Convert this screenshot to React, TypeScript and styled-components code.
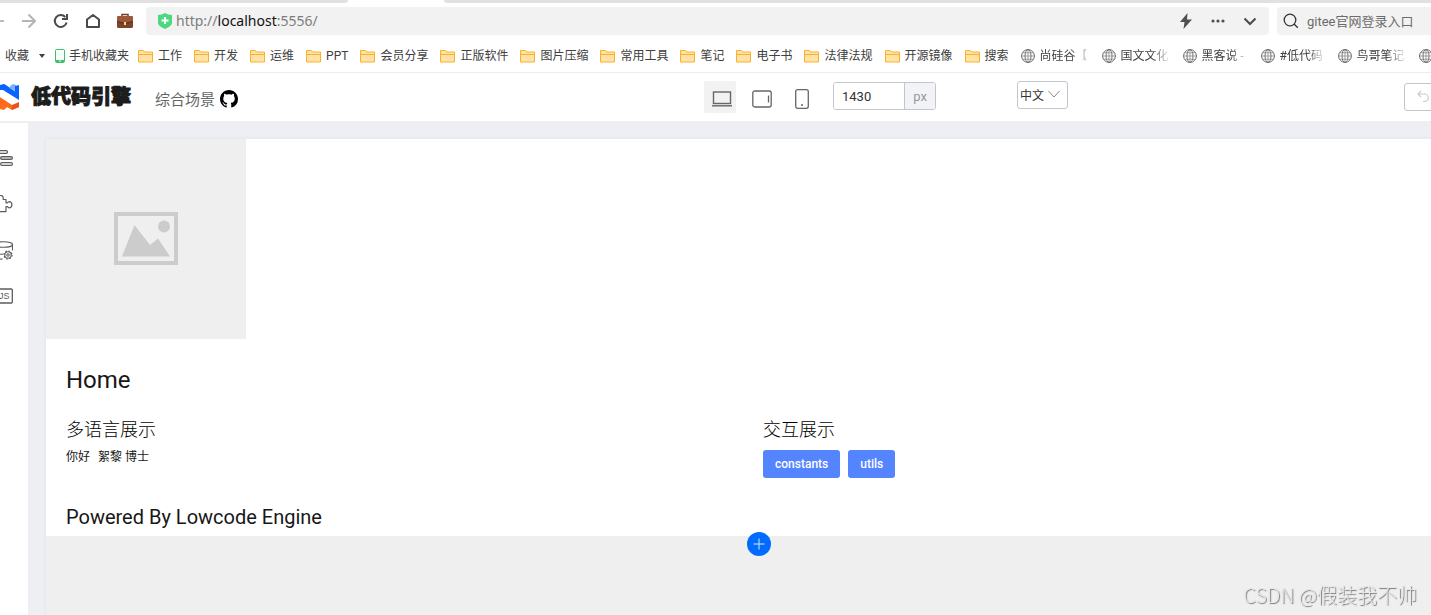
import React from "react";
import styled, { createGlobalStyle, css } from "styled-components";

const GlobalStyle = createGlobalStyle`
  *, *::before, *::after { box-sizing: border-box; }
  body {
    margin: 0;
    background: #fff;
    color: #333;
    font-family: Roboto, "Noto Sans CJK SC", sans-serif;
    font-size: 12px;
    overflow: hidden;
  }
  svg { display: block; flex: none; }
  button, input, select { font: inherit; color: inherit; margin: 0; }
  h1, h2, p { margin: 0; font-weight: 400; }
`;

const Page = styled.div`
  display: flex;
  flex-direction: column;
  min-height: 100vh;
  overflow: hidden;
`;

/* Browser chrome */

const TabStrip = styled.div`
  display: flex;
  height: 3px;
`;

const InactiveTabs = styled.div<{ $side: "left" | "right" }>`
  background: #e1e1e1;
  ${(p) =>
    p.$side === "left"
      ? css`
          flex: 0 0 348px;
          border-bottom-right-radius: 3px;
        `
      : css`
          flex: 1;
          margin-left: 96px;
          border-bottom-left-radius: 3px;
        `}
`;

const NavBar = styled.nav`
  display: flex;
  align-items: center;
  height: 36px;
  overflow: hidden;
`;

const NavButtons = styled.div`
  display: flex;
  align-items: center;
  gap: 16px;
  margin-left: -11px;
  padding-right: 13px;
`;

const IconButton = styled.button`
  display: flex;
  align-items: center;
  justify-content: center;
  min-width: 16px;
  height: 20px;
  padding: 0;
  border: 0;
  background: none;
  color: #4a4a4a;
`;

const AddressBar = styled.div`
  display: flex;
  align-items: center;
  flex: 1;
  height: 28px;
  padding: 0 11px 0 12px;
  border-radius: 4px;
  background: #f2f2f2;
`;

const Url = styled.a`
  flex: 1;
  margin-left: 4px;
  color: #7d7d7d;
  font-family: "Noto Sans", sans-serif;
  font-size: 14px;
  line-height: 20px;
  text-decoration: none;
`;

const Host = styled.span`
  color: #111;
`;

const AddressActions = styled.div`
  display: flex;
  gap: 16px;
`;

const SearchBox = styled.label`
  display: flex;
  align-items: center;
  gap: 8px;
  flex: 0 0 160px;
  height: 28px;
  margin: 0 -6px 0 8px;
  padding-left: 6px;
  border-radius: 4px;
  background: #f2f2f2;
`;

const SearchInput = styled.input`
  width: 130px;
  padding: 0;
  border: 0;
  outline: 0;
  background: none;
  color: #666;
  font-size: 13px;
  &::placeholder { color: #6b6b6b; opacity: 1; }
`;

const BookmarkBar = styled.div`
  display: flex;
  align-items: center;
  gap: 12px;
  height: 34px;
  border-bottom: 1px solid #ececec;
  overflow: hidden;
`;

const FavoriteGroup = styled.div`
  display: flex;
  align-items: center;
  gap: 10px;
  margin: 0 -3px 0 -12px;
`;

const Bookmark = styled.a<{ $gap?: number }>`
  display: flex;
  align-items: center;
  flex: none;
  gap: ${(p) => p.$gap ?? 5}px;
  color: #404040;
  line-height: 20px;
  white-space: nowrap;
  text-decoration: none;
`;

const FadedLabel = styled.span<{ $width: number }>`
  width: ${(p) => p.$width}px;
  mask-image: linear-gradient(to right, #000 60%, transparent);
`;

/* Designer header */

const Header = styled.header`
  display: grid;
  grid-template-columns: 2fr auto 1fr;
  align-items: center;
  height: 48px;
  padding-right: 11px;
`;

const Brand = styled.div`
  display: flex;
  align-items: center;
  margin-left: -7px;
`;

const BrandName = styled.strong`
  margin: 0 24px 0 12px;
  color: #1c1c1c;
  font-size: 20px;
  font-weight: 900;
  line-height: 28px;
  -webkit-text-stroke: 1px #1c1c1c;
`;

const SceneName = styled.span`
  margin: 6px 5px 0 0;
  color: #666;
  font-size: 15px;
  line-height: 20px;
`;

const RepoLink = styled.a`
  margin-top: 4px;
  color: #000;
`;

const Tools = styled.div`
  display: flex;
  align-items: center;
`;

const DeviceButton = styled.button<{ $active?: boolean }>`
  display: flex;
  align-items: center;
  justify-content: center;
  width: 32px;
  height: 32px;
  margin-right: 8px;
  padding: 4px 0 0 4px;
  border: 0;
  border-radius: 2px;
  background: ${(p) => (p.$active ? "#f2f2f2" : "transparent")};
  color: #666;
`;

const WidthField = styled.label`
  display: flex;
  width: 103px;
  height: 28px;
  margin: 0 81px 2px 9px;
  border: 1px solid #c4c6cf;
  border-radius: 3px;
  overflow: hidden;
`;

const WidthInput = styled.input`
  flex: 1;
  min-width: 0;
  padding: 0 8px;
  border: 0;
  outline: 0;
  background: #fff;
  font-size: 13px;
`;

const Unit = styled.span`
  width: 31px;
  border-left: 1px solid #c4c6cf;
  background: #f2f3f7;
  color: #999;
  font-size: 13px;
  line-height: 28px;
  text-align: center;
`;

const LocaleField = styled.label`
  position: relative;
  width: 51px;
  height: 28px;
  margin-bottom: 4px;
  svg {
    position: absolute;
    top: 9px;
    right: 8px;
    pointer-events: none;
  }
`;

const LocaleSelect = styled.select`
  width: 100%;
  height: 100%;
  padding: 2px 2px 0;
  appearance: none;
  border: 1px solid #c4c6cf;
  border-radius: 3px;
  background: #fff;
`;

const UndoButton = styled.button`
  display: flex;
  align-items: center;
  justify-self: end;
  width: 44px;
  height: 28px;
  margin-right: -28px;
  padding: 0 11px;
  border: 1px solid #c4c6cf;
  border-radius: 3px;
  background: #fff;
  color: #ccc;
`;

/* Workspace */

const Workspace = styled.main`
  display: flex;
  flex: 1;
  border-top: 2px solid #edeff3;
`;

const SideRail = styled.aside`
  display: flex;
  flex-direction: column;
  gap: 26px;
  flex: 0 0 28px;
  padding-top: 25px;
  overflow: hidden;
`;

const RailButton = styled(IconButton)`
  width: 20px;
  margin-left: -7px;
  color: #5c5c5c;
`;

const Stage = styled.div`
  display: flex;
  flex: 1;
  min-width: 0;
  padding: 16px 0 0 18px;
  background: #edeff3;
  overflow: hidden;
`;

const Canvas = styled.div`
  flex: 1;
  margin-right: -45px;
  background: #efefef;
  box-shadow: 0 0 3px rgba(31, 56, 88, 0.08);
`;

const Document = styled.article`
  position: relative;
  background: #fff;
  color: #171717;
`;

const Placeholder = styled.figure`
  display: flex;
  align-items: center;
  justify-content: center;
  width: 200px;
  height: 200px;
  margin: 0;
  background: #efefef;
`;

const Content = styled.div`
  padding: 20px 20px 0;
`;

const PageTitle = styled.h1`
  font-size: 24px;
  line-height: 42px;
`;

const Columns = styled.div`
  display: grid;
  grid-template-columns: 1fr 1fr;
  gap: 4px;
  padding: 16px 0 20px;
`;

const SectionTitle = styled.h2`
  color: #000;
  font-size: 18px;
  font-weight: 300;
  line-height: 26px;
`;

const Greeting = styled.p`
  display: flex;
  padding-top: 4px;
  line-height: 20px;
  span + span { margin-left: 8px; }
`;

const ButtonRow = styled.div`
  display: flex;
  gap: 8px;
  padding-top: 7px;
`;

const PrimaryButton = styled.button`
  height: 28px;
  padding: 0 12px;
  border: 0;
  border-radius: 3px;
  background: #5584ff;
  color: #fff;
  font-weight: 500;
`;

const Footer = styled.h2`
  padding: 4px 0;
  font-size: 20px;
  line-height: 30px;
`;

const AddButton = styled.button`
  position: absolute;
  left: 50%;
  bottom: -20px;
  display: flex;
  align-items: center;
  justify-content: center;
  width: 24px;
  height: 24px;
  margin-left: -14px;
  padding: 0;
  border: 0;
  border-radius: 50%;
  background: #006cff;
  color: #d9e8ff;
`;

const Watermark = styled.div`
  position: fixed;
  right: 14px;
  bottom: 7px;
  color: #e8e8e8;
  font-family: "Noto Sans CJK SC", sans-serif;
  font-size: 20px;
  font-weight: 300;
  line-height: 26px;
  text-shadow: 1px 1px 1px #777;
`;

/* Icons */

const stroke = { fill: "none", stroke: "currentColor" };

const BackIcon = () => (
  <svg width="14" height="16" viewBox="0 0 14 16" fill="none" stroke="#bbb" strokeWidth="2">
    <path d="M14 8H1M7 2L1 8l6 6" />
  </svg>
);

const ForwardIcon = () => (
  <svg width="14" height="16" viewBox="0 0 14 16" fill="none" stroke="#b5b5b5" strokeWidth="2">
    <path d="M0 8h13M6.500 1.500L13 8l-6.500 6.500" />
  </svg>
);

const ReloadIcon = () => (
  <svg width="16" height="16" viewBox="0 0 16 16" {...stroke} strokeWidth="2">
    <path d="M13.600 9.500A6 6 0 1 1 12.300 4" />
    <path d="M14 1v5H9" />
  </svg>
);

const HomeIcon = () => (
  <svg width="16" height="16" viewBox="0 0 16 16" {...stroke} strokeWidth="2" strokeLinejoin="round">
    <path d="M2 6.500L8 2l6 4.500V14H2z" />
  </svg>
);

const BriefcaseIcon = () => (
  <svg width="16" height="16" viewBox="0 0 16 16">
    <path d="M5 4V1.500h6V4" fill="none" stroke="#7a3d25" strokeWidth="1.500" />
    <rect y="3" width="16" height="12" rx="1.500" fill="#7d432b" />
    <path d="M0 4.500A1.500 1.500 0 0 1 1.500 3h13A1.500 1.500 0 0 1 16 4.500V8L8 10 0 8z" fill="#9b583b" />
    <path d="M0 8.500l8 2 8-2" fill="none" stroke="#5e2d1b" />
    <rect x="7" y="9" width="2" height="3" fill="#ffd98a" />
  </svg>
);

const ShieldIcon = () => (
  <svg width="14" height="16" viewBox="0 0 14 16">
    <path d="M0 2Q4 2 7 0q3 2 7 2v8q0 3-7 6-7-3-7-6z" fill="#4bd880" />
    <path d="M7 4v7M3.500 7.500h7" stroke="#fff" strokeWidth="2" />
  </svg>
);

const BoltIcon = () => (
  <svg width="16" height="16" viewBox="0 0 16 16" fill="#505050">
    <path d="M9.500 0L2 9h4.500L5.500 16 14 6.500H9z" />
  </svg>
);

const DotsIcon = () => (
  <svg width="16" height="16" viewBox="0 0 16 16" fill="#505050">
    <circle cx="3" cy="8" r="1.600" />
    <circle cx="8" cy="8" r="1.600" />
    <circle cx="13" cy="8" r="1.600" />
  </svg>
);

const ChevronIcon = () => (
  <svg width="16" height="16" viewBox="0 0 16 16" {...stroke} strokeWidth="2">
    <path d="M2.500 5.500L8 11l5.500-5.500" />
  </svg>
);

const SearchIcon = () => (
  <svg width="16" height="16" viewBox="0 0 16 16" {...stroke} strokeWidth="1.300">
    <circle cx="7" cy="7" r="5.800" />
    <path d="M11 11l3.800 3.800" />
  </svg>
);

const StarIcon = () => (
  <svg width="12" height="14" viewBox="0 0 12 14" fill="#ffb340">
    <path d="M5 1l1.800 4 5.200.5-4 3 1 4.500L5 11z" />
  </svg>
);

const CaretIcon = () => (
  <svg width="6" height="4" viewBox="0 0 6 4" fill="#404040">
    <path d="M0 0h6L3 4z" />
  </svg>
);

const PhoneBookmarkIcon = () => (
  <svg width="10" height="14" viewBox="0 0 10 14">
    <rect x=".5" y=".5" width="9" height="13" rx="1" fill="#f3fff7" stroke="#3fbf6c" />
    <path d="M1 11h8v2H1z" fill="#3fbf6c" />
    <path d="M4 12h2" stroke="#fff" />
  </svg>
);

const FolderIcon = () => (
  <svg width="15" height="14" viewBox="0 0 15 14">
    <path d="M.5 13V1.500h4.500L7 3h7.500v10z" fill="#ffe2a6" stroke="#fbb02d" strokeLinejoin="round" />
    <path d="M1 5.500h13" stroke="#fbb02d" />
  </svg>
);

const GlobeIcon = () => (
  <svg width="14" height="14" viewBox="0 0 14 14" fill="none" stroke="#6a6a6a">
    <circle cx="7" cy="7" r="6.400" />
    <ellipse cx="7" cy="7" rx="3" ry="6.400" strokeWidth=".9" />
    <path d="M7 .6v12.800M.6 7h12.800M1.800 3.800h10.400M1.800 10.200h10.400" strokeWidth=".6" />
  </svg>
);

const LogoIcon = () => (
  <svg width="26" height="26" viewBox="0 0 26 26">
    <path d="M0 4l7-3v8l-7 4z" fill="#8db9ff" />
    <path d="M7 1l4-1 6 4v6L7 6z" fill="#0a62ff" />
    <path d="M11 0l15 10v7L7 5z" fill="#0a62ff" />
    <path d="M17 4V2l3-2 3 1v7z" fill="#7fb0ff" />
    <path d="M22 2l4-1v16l-4-3z" fill="#0a62ff" />
    <path d="M0 14l7-2v12l-7-4z" fill="#ffb088" />
    <path d="M7 13l12 7 7-3v6l-7 3-5-3-3 3-4-1z" fill="#ff6a1a" />
    <path d="M19 20l7-3v6l-7 3z" fill="#e8541a" />
    <path d="M7 6l3 0 16 10v2l-7 3L7 13z" fill="#fff" />
  </svg>
);

const GithubIcon = () => (
  <svg width="18" height="18" viewBox="0 0 16 16" fill="currentColor">
    <path d="M8 0C3.580 0 0 3.580 0 8c0 3.540 2.290 6.530 5.470 7.590.4.070.55-.17.55-.38 0-.19-.01-.82-.01-1.490-2.010.37-2.530-.49-2.690-.94-.09-.23-.48-.94-.82-1.130-.28-.15-.68-.52-.01-.53.63-.01 1.080.58 1.230.82.72 1.210 1.870.87 2.330.66.07-.52.28-.87.51-1.070-1.780-.2-3.640-.89-3.640-3.950 0-.87.31-1.590.82-2.150-.08-.2-.36-1.020.08-2.120 0 0 .67-.21 2.200.82.64-.18 1.320-.27 2-.27s1.360.09 2 .27c1.530-1.040 2.200-.82 2.200-.82.44 1.100.16 1.920.08 2.120.51.56.82 1.270.82 2.150 0 3.070-1.870 3.750-3.650 3.950.29.25.54.73.54 1.480 0 1.070-.01 1.930-.01 2.200 0 .21.15.46.55.38A8.010 8.010 0 0 0 16 8c0-4.420-3.580-8-8-8z" />
  </svg>
);

const LaptopIcon = () => (
  <svg width="20" height="16" viewBox="0 0 20 16" {...stroke}>
    <rect x="1.500" y="1" width="17" height="11.500" strokeWidth="1.400" />
    <path d="M0 14.800h20" strokeWidth="1.400" />
  </svg>
);

const TabletIcon = () => (
  <svg width="20" height="18" viewBox="0 0 20 18" {...stroke} strokeWidth="1.300">
    <rect x=".8" y="1" width="18.400" height="16" rx="2" />
    <path d="M16.500 5.500v7" />
  </svg>
);

const PhoneIcon = () => (
  <svg width="14" height="20" viewBox="0 0 14 20" {...stroke} strokeWidth="1.300">
    <rect x=".7" y=".7" width="12.600" height="18.600" rx="2" />
    <path d="M6 16h2" strokeWidth="1.600" />
  </svg>
);

const LocaleChevron = () => (
  <svg width="12" height="8" viewBox="0 0 12 8" fill="none" stroke="#888">
    <path d="M.5 1L6 7l5.500-6" />
  </svg>
);

const UndoIcon = () => (
  <svg width="20" height="14" viewBox="0 0 20 14" {...stroke} strokeWidth="1.200">
    <path d="M5 1L2 4l3 3M2 4h6.500a3.600 3.600 0 0 1 0 7.500H7" />
  </svg>
);

const OutlineIcon = () => (
  <svg width="20" height="18" viewBox="0 0 20 18" {...stroke} strokeWidth="1.200">
    <rect x="1" y="1.600" width="13.500" height="2.800" rx="1.400" />
    <rect x="7.600" y="7.600" width="11.800" height="2.800" rx="1.400" fill="#ccc" />
    <rect x="7.600" y="13.600" width="11.800" height="2.800" rx="1.400" />
  </svg>
);

const PuzzleIcon = () => (
  <svg width="20" height="18" viewBox="0 0 20 18" {...stroke} strokeWidth="1.200" strokeLinejoin="round">
    <path d="M1 4.500h4V3a2.600 2.600 0 0 1 5.200 0v1.500H13v3.300h1.500q.6-1.200 2-1.200 2.400.4 2.400 3.100t-2.400 3.100q-1.400 0-2-1.200H13v5H1v-4.500h1a2.200 2.200 0 0 0 0-4.400H1z" />
  </svg>
);

const DatabaseIcon = () => (
  <svg width="20" height="20" viewBox="0 0 20 20" {...stroke} strokeWidth="1.100">
    <ellipse cx="10.500" cy="4.500" rx="9" ry="2.800" />
    <path d="M1.500 4.500v12c0 1.500 4 2.600 8 2.600M19.500 4.500v6M1.500 12.500c0 1.500 5 2 9 1.500" />
    <circle cx="15" cy="15" r="3.200" />
    <circle cx="15" cy="15" r="4" strokeWidth="1.200" strokeDasharray="1.600 1.540" />
    <circle cx="15" cy="15" r="1.200" />
  </svg>
);

const JsIcon = () => (
  <svg width="20" height="16" viewBox="0 0 20 16">
    <rect x=".7" y="1" width="18.600" height="14" rx="1" fill="none" stroke="currentColor" strokeWidth="1.300" />
    <text x="6" y="11" fill="currentColor" fontFamily="Liberation Sans, sans-serif" fontSize="9">
      JS
    </text>
  </svg>
);

const PictureIcon = () => (
  <svg width="64" height="54" viewBox="0 0 64 54" fill="#ccc">
    <path d="M0 0h64v53H0zM4 4v45h56V4z" fillRule="evenodd" />
    <circle cx="50" cy="14.500" r="6" />
    <path d="M8 44.500L20.500 13 36 33l8-6.500 12 18z" />
  </svg>
);

const PlusIcon = () => (
  <svg width="12" height="12" viewBox="0 0 12 12" {...stroke}>
    <path d="M6 .5v11M.5 6h11" />
  </svg>
);

const folders = [
  "工作", "开发", "运维", "PPT", "会员分享", "正版软件", "图片压缩",
  "常用工具", "笔记", "电子书", "法律法规", "开源镜像", "搜索",
];

const sites = [
  { name: "尚硅谷【", width: 50 },
  { name: "国文文化", width: 50 },
  { name: "黑客说 -", width: 47 },
  { name: "#低代码", width: 46 },
  { name: "鸟哥笔记", width: 50 },
  { name: "", width: 50 },
];

const railItems = [
  { label: "大纲树", icon: <OutlineIcon /> },
  { label: "组件库", icon: <PuzzleIcon /> },
  { label: "数据源", icon: <DatabaseIcon /> },
  { label: "源码面板", icon: <JsIcon /> },
];

export default function App() {
  return (
    <Page>
      <GlobalStyle />
      <TabStrip>
        <InactiveTabs $side="left" />
        <InactiveTabs $side="right" />
      </TabStrip>

      <NavBar>
        <NavButtons>
          <IconButton aria-label="后退"><BackIcon /></IconButton>
          <IconButton aria-label="前进"><ForwardIcon /></IconButton>
          <IconButton aria-label="刷新"><ReloadIcon /></IconButton>
          <IconButton aria-label="主页"><HomeIcon /></IconButton>
          <IconButton aria-label="工具箱"><BriefcaseIcon /></IconButton>
        </NavButtons>
        <AddressBar>
          <ShieldIcon />
          <Url href="#">http://<Host>localhost</Host>:5556/</Url>
          <AddressActions>
            <IconButton aria-label="加速"><BoltIcon /></IconButton>
            <IconButton aria-label="更多"><DotsIcon /></IconButton>
            <IconButton aria-label="展开"><ChevronIcon /></IconButton>
          </AddressActions>
        </AddressBar>
        <SearchBox>
          <SearchIcon />
          <SearchInput aria-label="搜索" placeholder="gitee官网登录入口" />
        </SearchBox>
      </NavBar>

      <BookmarkBar>
        <FavoriteGroup>
          <Bookmark href="#"><StarIcon />收藏</Bookmark>
          <CaretIcon />
          <Bookmark href="#" $gap={4}><PhoneBookmarkIcon />手机收藏夹</Bookmark>
        </FavoriteGroup>
        {folders.map((name) => (
          <Bookmark href="#" key={name}><FolderIcon />{name}</Bookmark>
        ))}
        {sites.map((site) => (
          <Bookmark href="#" key={site.name}>
            <GlobeIcon />
            <FadedLabel $width={site.width}>{site.name}</FadedLabel>
          </Bookmark>
        ))}
      </BookmarkBar>

      <Header>
        <Brand>
          <LogoIcon />
          <BrandName>低代码引擎</BrandName>
          <SceneName>综合场景</SceneName>
          <RepoLink href="#" aria-label="GitHub"><GithubIcon /></RepoLink>
        </Brand>
        <Tools>
          <DeviceButton $active aria-label="桌面"><LaptopIcon /></DeviceButton>
          <DeviceButton aria-label="平板"><TabletIcon /></DeviceButton>
          <DeviceButton aria-label="手机"><PhoneIcon /></DeviceButton>
          <WidthField>
            <WidthInput aria-label="画布宽度" defaultValue="1430" />
            <Unit>px</Unit>
          </WidthField>
          <LocaleField>
            <LocaleSelect aria-label="语言" defaultValue="zh">
              <option value="zh">中文</option>
            </LocaleSelect>
            <LocaleChevron />
          </LocaleField>
        </Tools>
        <UndoButton aria-label="撤销"><UndoIcon /></UndoButton>
      </Header>

      <Workspace>
        <SideRail>
          {railItems.map((item) => (
            <RailButton key={item.label} aria-label={item.label}>{item.icon}</RailButton>
          ))}
        </SideRail>
        <Stage>
          <Canvas>
            <Document>
              <Placeholder><PictureIcon /></Placeholder>
              <Content>
                <PageTitle>Home</PageTitle>
                <Columns>
                  <section>
                    <SectionTitle>多语言展示</SectionTitle>
                    <Greeting><span>你好</span><span>絮黎 博士</span></Greeting>
                  </section>
                  <section>
                    <SectionTitle>交互展示</SectionTitle>
                    <ButtonRow>
                      <PrimaryButton>constants</PrimaryButton>
                      <PrimaryButton>utils</PrimaryButton>
                    </ButtonRow>
                  </section>
                </Columns>
                <Footer>Powered By Lowcode Engine</Footer>
              </Content>
              <AddButton aria-label="添加"><PlusIcon /></AddButton>
            </Document>
          </Canvas>
        </Stage>
      </Workspace>
      <Watermark>CSDN @假装我不帅</Watermark>
    </Page>
  );
}
